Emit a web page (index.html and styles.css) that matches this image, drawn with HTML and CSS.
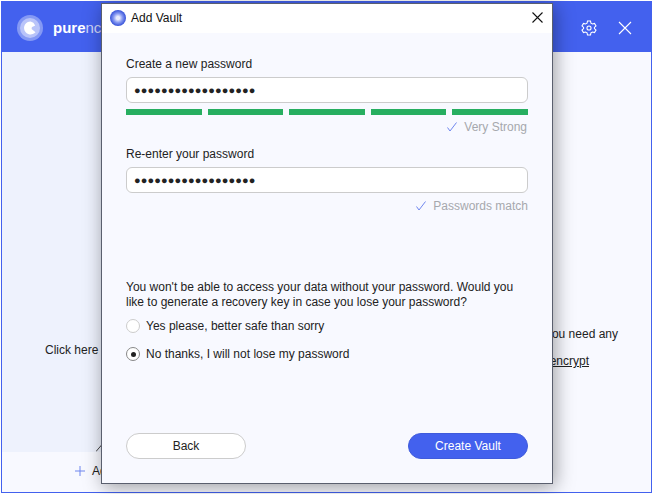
FILE: index.html
```html
<!DOCTYPE html>
<html lang="en">
<head>
    <meta charset="UTF-8">
    <title>PureEncrypt - Add Vault</title>
    <link rel="stylesheet" href="styles.css">
</head>
<body>
    <div class="app">
        <header class="app-header">
            <div class="brand">
                <svg class="brand-logo" width="26" height="26" viewBox="0 0 26 26">
                    <circle cx="13" cy="13" r="13" fill="#8599f4"/>
                    <circle cx="13" cy="13" r="10" fill="#b9c4f9"/>
                    <path d="M13.500 6.500a6.500 6.500 0 1 0 5 10.700l-2.700-2.300a1.800 1.800 0 0 1 .4-3.500l2-.9a6.500 6.500 0 0 0-4.700-4z" fill="#fff"/>
                </svg>
                <span class="brand-name"><b>pure</b>ncrypt</span>
            </div>
            <div class="app-actions">
                <svg width="16" height="16" viewBox="0 0 18 18" fill="none" stroke="#fff" stroke-width="1.200">
                    <path d="M7.300 1.200h3.400l.5 2.300 1.700 1 2.300-.7 1.700 2.900-1.800 1.600v1.400l1.800 1.600-1.700 2.900-2.300-.7-1.700 1-.5 2.300H7.300l-.5-2.300-1.700-1-2.300.7-1.700-2.900 1.800-1.600V8.300L1.100 6.700l1.700-2.900 2.300.7 1.700-1z"/>
                    <circle cx="9" cy="9" r="2.300"/>
                </svg>
                <svg width="14" height="14" viewBox="0 0 14 14" stroke="#fff" stroke-width="1.100">
                    <path d="M1 1l12 12M13 1L1 13"/>
                </svg>
            </div>
        </header>
        <main class="app-main">
            <section class="pane pane-left">
                <p>Click here</p>
                <svg class="caret" width="6" height="8" viewBox="0 0 6 8" fill="none" stroke="#444"><path d="M0 7.500L6 .500"/></svg>
            </section>
            <section class="pane pane-right">
                <p>if you need any</p>
                <p><a href="#">purencrypt</a></p>
            </section>
        </main>
        <footer class="app-footer">
            <svg width="10" height="10" viewBox="0 0 10 10" stroke="#6f86ee"><path d="M5 0v10M0 5h10"/></svg>
            <span>Add Vault</span>
        </footer>
    </div>

    <div class="modal">
        <div class="modal-title">
            <div class="modal-name">
                <svg width="16" height="16" viewBox="0 0 16 16">
                    <defs>
                        <radialGradient id="orb" cx="50%" cy="50%" r="50%">
                            <stop offset="0.2" stop-color="#e6eafd"/>
                            <stop offset="0.55" stop-color="#8a9cf2"/>
                            <stop offset="1" stop-color="#3450d8"/>
                        </radialGradient>
                    </defs>
                    <circle cx="8" cy="8" r="8" fill="url(#orb)"/>
                </svg>
                <span>Add Vault</span>
            </div>
            <svg class="modal-close" width="11" height="11" viewBox="0 0 11 11" stroke="#111" stroke-width="1.100">
                <path d="M.5.500l10 10M10.500.500l-10 10"/>
            </svg>
        </div>
        <div class="modal-body">
            <label class="field-label">Create a new password</label>
            <div class="pass-input">●●●●●●●●●●●●●●●●●●</div>
            <div class="strength">
                <span></span><span></span><span></span><span></span><span></span>
            </div>
            <div class="hint hint-strong">
                <svg width="10" height="10" viewBox="0 0 10 10" fill="none" stroke="#6f86ee"><path d="M.5 5.500L3 9 9.500.500"/></svg>
                <span>Very Strong</span>
            </div>

            <label class="field-label second">Re-enter your password</label>
            <div class="pass-input">●●●●●●●●●●●●●●●●●●</div>
            <div class="hint hint-match">
                <svg width="10" height="10" viewBox="0 0 10 10" fill="none" stroke="#6f86ee"><path d="M.5 5.500L3 9 9.500.500"/></svg>
                <span>Passwords match</span>
            </div>

            <p class="notice">You won't be able to access your data without your password. Would you like to generate a recovery key in case you lose your password?</p>
            <div class="option"><span class="radio"></span>Yes please, better safe than sorry</div>
            <div class="option"><span class="radio checked"></span>No thanks, I will not lose my password</div>

            <div class="modal-buttons">
                <button class="btn btn-back">Back</button>
                <button class="btn btn-create">Create Vault</button>
            </div>
        </div>
    </div>
</body>
</html>
```

FILE: styles.css
```css
* {
    margin: 0;
    padding: 0;
    box-sizing: border-box;
}

body {
    font-family: "Liberation Sans", Arial, sans-serif;
    font-size: 12px;
    color: #222;
    background: #fff;
    width: 653px;
    height: 494px;
    overflow: hidden;
    padding: 1px;
}

/* Main window behind the dialog */
.app {
    height: 492px;
    border: 1px solid #4361ee;
    border-top: 0;
    display: flex;
    flex-direction: column;
    background: #f8f9ff;
}

.app-header {
    height: 51px;
    background: #4361ee;
    display: flex;
    justify-content: space-between;
    align-items: center;
    padding: 2px 19px 0 15px;
}

.brand {
    width: 85px;
    overflow: hidden;
    display: flex;
    align-items: center;
    gap: 10px;
    flex-shrink: 0;
}

.brand-logo {
    flex-shrink: 0;
}

.brand-name {
    color: rgba(255, 255, 255, 0.75);
    font-size: 15px;
    white-space: nowrap;
}

.brand-name b {
    color: #fff;
}

.app-actions {
    display: flex;
    align-items: center;
    gap: 21px;
}

.app-main {
    height: 400px;
    display: flex;
}

.pane p {
    white-space: nowrap;
}

.pane-left {
    position: relative;
    width: 550px;
    background: linear-gradient(90deg, #eef2fd 300px, #f8f9ff 300px);
    padding: 291px 0 0 43px;
}

.caret {
    position: absolute;
    left: 94px;
    bottom: 0;
}

.pane-right {
    flex: 1;
    overflow: hidden;
    padding: 275px 33px 0 0;
    display: flex;
    flex-direction: column;
    align-items: flex-end;
    gap: 13px;
}

.pane-right p:last-child {
    margin-right: 29px;
}

.pane-right a {
    color: #222;
}

.app-footer {
    width: 99px;
    overflow: hidden;
    flex: 1;
    display: flex;
    align-items: flex-start;
    gap: 7px;
    padding: 12px 0 0 73px;
    white-space: nowrap;
    line-height: 14px;
}

.app-footer svg {
    flex-shrink: 0;
    margin-top: 2px;
}

/* Add Vault dialog */
.modal {
    position: absolute;
    left: 101px;
    top: 3px;
    width: 452px;
    height: 481px;
    border: 1px solid #5a5f6e;
    background: #f8f9ff;
    box-shadow: 2px 3px 18px rgba(0, 0, 0, 0.38);
    display: flex;
    flex-direction: column;
}

.modal-title {
    height: 29px;
    background: #fff;
    display: flex;
    justify-content: space-between;
    align-items: center;
    padding: 0 9px 2px 8px;
}

.modal-name {
    display: flex;
    align-items: center;
    gap: 5px;
    color: #111;
}

.modal-body {
    flex: 1;
    padding: 24px 24px 0;
    display: flex;
    flex-direction: column;
}

.field-label {
    line-height: 14px;
}

.field-label.second {
    margin-top: 13px;
}

.pass-input {
    margin-top: 6px;
    height: 26px;
    background: #fff;
    border: 1px solid #ccc;
    border-radius: 6px;
    padding-left: 7px;
    font-size: 11px;
    letter-spacing: 0.1px;
    line-height: 24px;
    white-space: nowrap;
}

.strength {
    margin-top: 6px;
    display: flex;
    gap: 6px;
}

.strength span {
    flex: 1;
    height: 6px;
    background: #27ae60;
}

.hint {
    display: flex;
    justify-content: flex-end;
    align-items: center;
    gap: 7px;
    color: #a6a8ad;
    line-height: 14px;
}

.hint-strong {
    margin-top: 5px;
    padding-right: 1px;
}

.hint-match {
    margin-top: 6px;
}

.notice {
    margin-top: 67px;
    line-height: 15px;
}

.option {
    display: flex;
    align-items: center;
    gap: 6px;
    height: 14px;
    margin-top: 14px;
}

.notice + .option {
    margin-top: 9px;
}

.radio {
    width: 14px;
    height: 14px;
    border: 1px solid #ccc;
    border-radius: 50%;
    background: #fff;
    display: flex;
    align-items: center;
    justify-content: center;
}

.radio.checked {
    border-color: #888;
}

.radio.checked::after {
    content: "";
    width: 5px;
    height: 5px;
    border-radius: 50%;
    background: #222;
}

.modal-buttons {
    margin-top: 72px;
    display: flex;
    justify-content: space-between;
}

.btn {
    width: 120px;
    height: 26px;
    border-radius: 13px;
    font-family: inherit;
    font-size: 12px;
}

.btn-back {
    background: #fff;
    border: 1px solid #ccc;
    color: #222;
}

.btn-create {
    background: #4361ee;
    border: 1px solid #3f5bdc;
    color: #fff;
}
```
